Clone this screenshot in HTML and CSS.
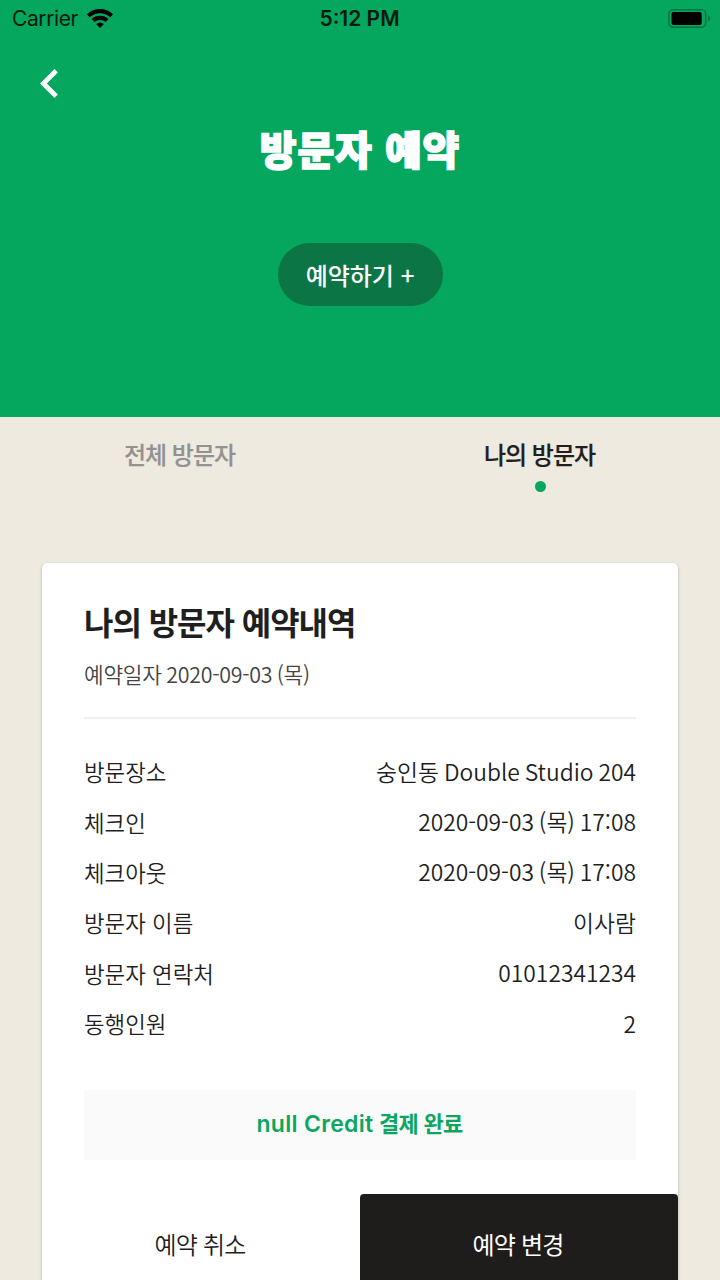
FILE: index.html
```html
<!DOCTYPE html>
<html lang="ko">
<head>
    <meta charset="UTF-8">
    <meta name="viewport" content="width=device-width, initial-scale=1.0">
    <title>방문자 예약</title>
    <link rel="stylesheet" href="styles.css">
</head>
<body>
    <header class="header">
        <div class="status-bar">
            <div class="carrier">
                <span>Carrier</span>
                <svg class="wifi" viewBox="0 0 26 19" width="26" height="19">
                    <path d="M0 5.3Q5.5 0 13 0t13 5.3l-2.8 3.1Q18.8 4.3 13 4.3T2.8 8.4z"/>
                    <path d="M4.6 10Q8 6.8 13 6.8t8.4 3.2l-2.8 3Q16.3 10.9 13 10.9T7.4 13z"/>
                    <path d="M9.2 15q1.6-1.6 3.8-1.6t3.8 1.6L13 19z"/>
                </svg>
            </div>
            <span class="time">5:12 PM</span>
            <svg class="battery" viewBox="0 0 43 19" width="43" height="19">
                <rect class="battery-case" x=".75" y=".75" width="37" height="17.5" rx="4.5"/>
                <rect x="3.5" y="3" width="30.2" height="13" rx="2"/>
                <path class="battery-cap" d="M40 6.5q2.5 1 2.5 3T40 12.5z"/>
            </svg>
        </div>
        <a class="back" href="#">
            <svg viewBox="0 0 18 29" width="18" height="29"><path d="M16.2 1.7 3.4 14.5l12.8 12.8"/></svg>
        </a>
        <h1 class="title">방문자 예약</h1>
        <button class="reserve" type="button">예약하기 +</button>
    </header>

    <nav class="tabs">
        <a class="tab" href="#">전체 방문자</a>
        <a class="tab active" href="#">나의 방문자</a>
    </nav>

    <main class="card">
        <div class="card-body">
            <h2 class="card-title">나의 방문자 예약내역</h2>
            <p class="date">예약일자 2020-09-03 (목)</p>
            <ul class="details">
                <li><span>방문장소</span><span>숭인동 Double Studio 204</span></li>
                <li><span>체크인</span><span>2020-09-03 (목) 17:08</span></li>
                <li><span>체크아웃</span><span>2020-09-03 (목) 17:08</span></li>
                <li><span>방문자 이름</span><span>이사람</span></li>
                <li><span>방문자 연락처</span><span>01012341234</span></li>
                <li><span>동행인원</span><span>2</span></li>
            </ul>
            <p class="credit"><span>null Credit</span> 결제 완료</p>
        </div>
        <div class="actions">
            <button class="cancel" type="button">예약 취소</button>
            <button class="change" type="button">예약 변경</button>
        </div>
    </main>
</body>
</html>
```

FILE: styles.css
```css
*{
    margin: 0;
    padding: 0;
    box-sizing: border-box;
}
body{
    height: 1280px;
    overflow: hidden;
    background: #efeae0;
    color: #1f1f1f;
    font-family: "Noto Sans CJK KR", sans-serif;
    font-weight: 350;
}
a{
    color: inherit;
    text-decoration: none;
}
button{
    border: 0;
    font-family: inherit;
}
svg{
    display: block;
}
.header{
    height: 417px;
    background: #04a75d;
    display: flex;
    flex-direction: column;
    align-items: center;
}
.status-bar{
    width: 100%;
    height: 36px;
    padding: 0 9px 0 12px;
    display: grid;
    grid-template-columns: 1fr auto 1fr;
    align-items: center;
    color: #001b0e;
    font-family: Inter, sans-serif;
    font-size: 21px;
    font-weight: 400;
}
.carrier{
    display: flex;
    align-items: center;
    gap: 9px;
    letter-spacing: -.4px;
}
.time{
    margin-left: -4px;
    font-weight: 600;
}
.battery{
    justify-self: end;
}
.battery-case{
    fill: none;
    stroke: #037541;
    stroke-width: 1.5;
}
.battery-cap{
    fill: #037541;
}
.back{
    align-self: flex-start;
    margin: 33px 0 0 40px;
}
.back path{
    fill: none;
    stroke: #fff;
    stroke-width: 4.8;
}
.title{
    margin-top: 20px;
    line-height: 60px;
    color: #fff;
    font-size: 40px;
    font-weight: 900;
    letter-spacing: .9px;
    -webkit-text-stroke: 1.5px #fff;
}
.reserve{
    width: 165px;
    height: 63px;
    margin-top: 65px;
    border-radius: 32px;
    background: #0c7546;
    color: #fff;
    font-size: 24px;
    font-weight: 500;
}
.tabs{
    height: 146px;
    display: grid;
    grid-template-columns: 1fr 1fr;
    font-size: 24px;
    font-weight: 500;
    letter-spacing: -1px;
    line-height: 36px;
    text-align: center;
}
.tab{
    padding-top: 19px;
    color: #929292;
    text-indent: -1px;
    -webkit-text-stroke: .2px;
}
.active{
    color: #1f1f1f;
}
.active::after{
    content: "";
    display: block;
    width: 11px;
    height: 11px;
    margin: 9px auto 0;
    border-radius: 50%;
    background: #04a75d;
}
.card{
    width: 636px;
    margin: 0 auto;
    border-radius: 5px;
    background: #fff;
    box-shadow: 0 1px 3px rgba(0, 0, 0, .25);
}
.card-body{
    padding: 34px 42px 34px;
}
.card-title{
    font-size: 32px;
    font-weight: 700;
    letter-spacing: -1.05px;
    line-height: 48px;
}
.date{
    height: 74px;
    padding-top: 11px;
    border-bottom: 2px solid #f1f1f1;
    color: #444;
    font-size: 21.4px;
    letter-spacing: -.25px;
    line-height: 36px;
    word-spacing: -1.3px;
}
.details{
    padding-top: 27px;
    list-style: none;
}
.details li{
    height: 50.4px;
    display: flex;
    justify-content: space-between;
    align-items: center;
    font-size: 22.4px;
}
.details li span:last-child{
    font-size: 22.8px;
    word-spacing: -1.5px;
}
.credit{
    height: 70px;
    margin-top: 42px;
    padding-right: 1px;
    background: #fafafa;
    color: #0ba65f;
    font-size: 22px;
    font-weight: 700;
    letter-spacing: -.7px;
    line-height: 65px;
    text-align: center;
}
.credit span{
    font-family: Inter, sans-serif;
    font-size: 23px;
    font-weight: 600;
    letter-spacing: .3px;
}
.actions{
    display: grid;
    grid-template-columns: 1fr 1fr;
}
.actions button{
    height: 100px;
    padding: 0 2px 2px 0;
    border-radius: 4px;
    background: #fff;
    color: #1f1f1f;
    font-size: 24px;
    font-weight: 350;
    letter-spacing: -.8px;
}
.actions .change{
    background: #1f1d1c;
    color: #fff;
    font-weight: 400;
}
```
